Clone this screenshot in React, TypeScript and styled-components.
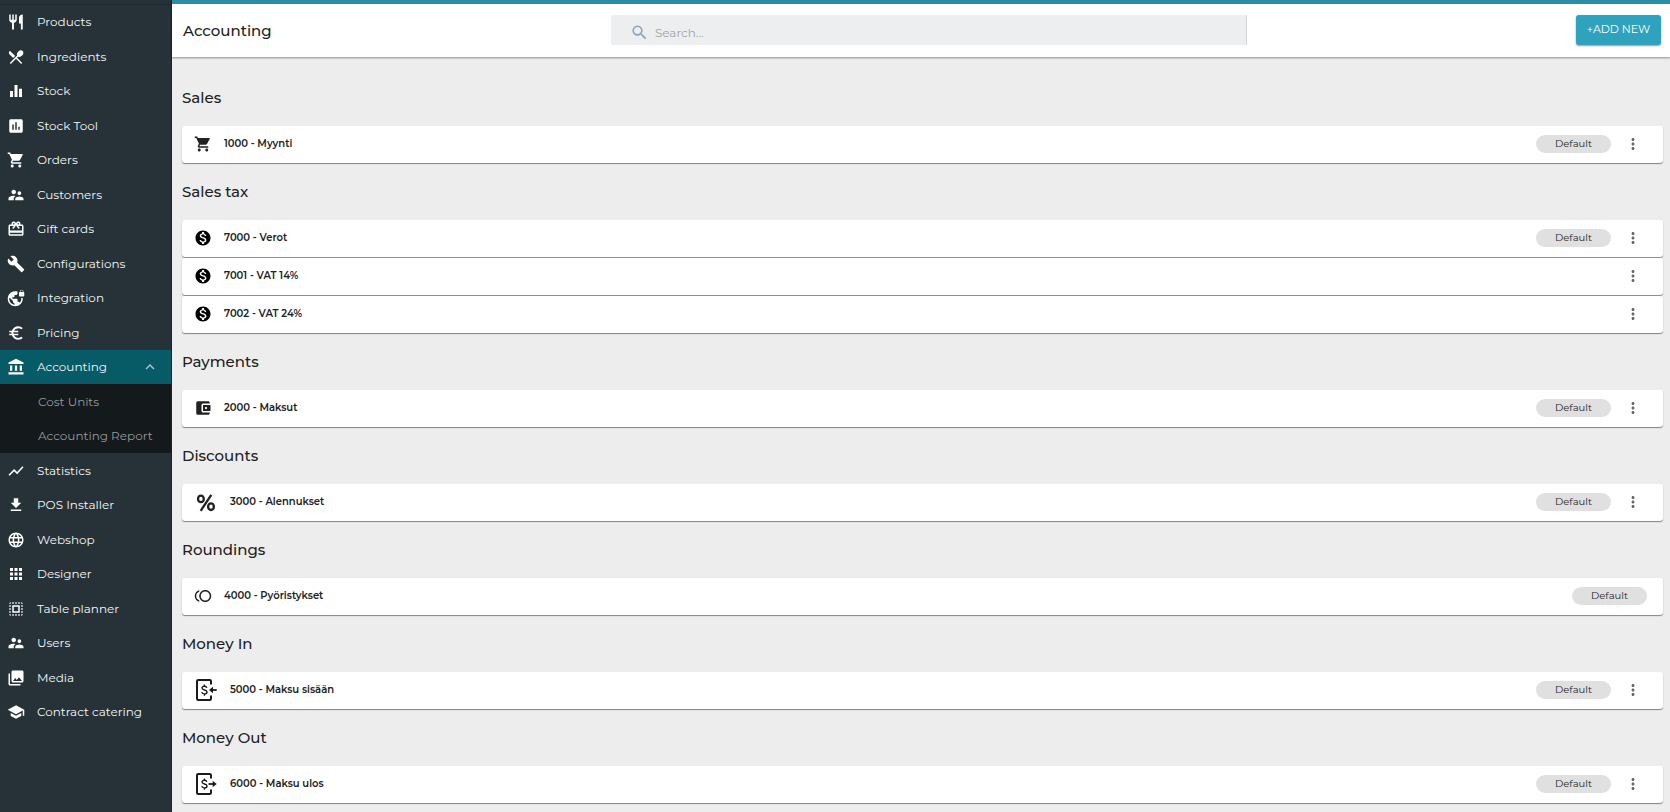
import React from "react";
import styled, { createGlobalStyle } from "styled-components";
import type { IconType } from "react-icons";
import {
  MdRestaurant, MdRestaurantMenu, MdEqualizer, MdAssessment, MdShoppingCart,
  MdSupervisorAccount, MdCardGiftcard, MdBuild, MdVpnLock, MdEuroSymbol,
  MdAccountBalance, MdShowChart, MdGetApp, MdLanguage, MdApps, MdSelectAll,
  MdPhotoLibrary, MdSchool, MdExpandLess, MdSearch, MdMonetizationOn,
  MdAccountBalanceWallet, MdToll, MdMoreVert,
} from "react-icons/md";

const GlobalStyle = createGlobalStyle`
  *, *::before, *::after { box-sizing: border-box; }
  body {
    margin: 0;
    background: #ededed;
    color: #212121;
    font-family: Montserrat, Inter, "Liberation Sans", sans-serif;
    font-size: 12px;
  }
  ul { list-style: none; margin: 0; padding: 0; }
  button, input { font: inherit; }
  svg { display: block; flex: none; }
`;

const Shell = styled.div`
  display: grid;
  grid-template-columns: 172px minmax(0, 1fr);
  min-height: 100vh;
`;

const Sidebar = styled.nav`
  background: #273238;
  border-right: 1px solid #1b2529;
`;

const NavList = styled.ul`
  margin-top: 4px;
  border-top: 1px solid #1f292e;
`;

const NavLink = styled.a<{ $active?: boolean; $tall?: boolean }>`
  display: flex;
  align-items: center;
  gap: 12px;
  height: ${(p) => (p.$tall ? 35 : 34)}px;
  padding: 0 12px 0 7px;
  color: #f3f5f6;
  background: ${(p) => (p.$active ? "#065b67" : "transparent")};
  line-height: 16px;
  text-decoration: none;
  white-space: nowrap;

  svg { color: #fff; }
`;

const NavText = styled.span`
  flex: 1;
`;

const Caret = styled(MdExpandLess)`
  && { color: #a9c6ca; }
`;

const SubList = styled.ul`
  background: #14191c;
`;

const SubLink = styled(NavLink)`
  padding-left: 38px;
  color: #95999b;
`;

const Header = styled.header`
  position: relative;
  display: grid;
  grid-template-columns: 29fr 43fr 28fr;
  align-items: start;
  height: 57px;
  padding: 11px 9px 0 10px;
  border-top: 4px solid #278fa7;
  background: #fff;
  box-shadow: 0 1px 2px rgba(0, 0, 0, 0.4);
`;

const PageTitle = styled.h1`
  margin: 0;
  padding-left: 1px;
  font-size: 15px;
  line-height: 32px;
  font-weight: 500;
`;

const SearchBox = styled.label`
  display: flex;
  align-items: center;
  gap: 6px;
  height: 30px;
  padding: 4px 16px 0 19px;
  background: #eceef0;
  border-right: 1px solid #d3d6d9;
  color: #8fa3b8;
`;

const SearchInput = styled.input`
  flex: 1;
  min-width: 0;
  padding: 0;
  border: 0;
  outline: 0;
  background: transparent;
  color: #212121;

  &::placeholder { color: #a3a5a7; opacity: 1; }
`;

const AddButton = styled.button`
  justify-self: end;
  width: 85px;
  height: 30px;
  padding: 0 0 2px;
  border: 0;
  border-radius: 3px;
  background: #2fa2be;
  color: #fff;
  font-size: 11px;
  box-shadow: 0 1px 2px rgba(0, 0, 0, 0.4);
`;

const Content = styled.main`
  padding: 31px 7px 9px 10px;
`;

const Section = styled.section`
  & + & { margin-top: 19px; }
`;

const SectionTitle = styled.h2`
  margin: 0 0 18px;
  font-size: 15px;
  line-height: 20px;
  font-weight: 500;
`;

const Cards = styled.ul`
  display: grid;
  gap: 1px;
`;

const Card = styled.li`
  display: flex;
  align-items: center;
  height: 37px;
  padding: 0 16px 2px 12px;
  border-radius: 3px;
  background: #fff;
  box-shadow: 0 1px 1px rgba(0, 0, 0, 0.45);
`;

const CardName = styled.span`
  flex: 1;
  margin-left: 12px;
  font-size: 10px;
  font-weight: 600;
`;

const Chip = styled.span`
  width: 75px;
  border-radius: 9px;
  background: #e0e0e0;
  color: #262626;
  font-size: 10px;
  line-height: 18px;
  text-align: center;
`;

const MenuButton = styled.button`
  display: grid;
  place-items: center;
  width: 28px;
  height: 28px;
  margin-left: 8px;
  padding: 0;
  border: 0;
  background: none;
  color: #666;
`;

const Percent = () => (
  <svg width="24" height="24" viewBox="0 0 24 24" fill="none" stroke="#212121" strokeWidth="2.300">
    <ellipse cx="6.900" cy="8.900" rx="2.900" ry="3.300" />
    <ellipse cx="17" cy="16.700" rx="2.900" ry="3.300" />
    <path d="M17.300 4.800 6.700 20.800" />
  </svg>
);

const MoneyDoor = ({ out }: { out?: boolean }) => (
  <svg width="24" height="24" viewBox="0 0 24 24" fill="none" stroke="#1b1b1b" strokeWidth="2">
    <path d="M17 6.500V3.200Q17 2 15.800 2H4.200Q3 2 3 3.200v17.600Q3 22 4.200 22h11.600Q17 22 17 20.800V17.500" />
    <path strokeWidth="1.400" d="M12.800 9.900C12.500 8.800 11.600 8.300 10.400 8.300c-1.400 0-2.400.7-2.400 1.800 0 2.600 5 1.200 5 3.900 0 1.200-1.100 1.900-2.600 1.900-1.400 0-2.400-.7-2.600-1.900M10.400 6.500v1.800M10.400 15.900v1.800" />
    <path strokeWidth="1.800" d={out ? "M14.500 12H20" : "M18 12h4.700"} />
    <path fill="#1b1b1b" stroke="none" d={out ? "M18.700 8.800 22.700 12l-4 3.200z" : "M19 8.800 15 12l4 3.200z"} />
  </svg>
);

const nav: { label: string; icon: IconType; children?: string[] }[] = [
  { label: "Products", icon: MdRestaurant },
  { label: "Ingredients", icon: MdRestaurantMenu },
  { label: "Stock", icon: MdEqualizer },
  { label: "Stock Tool", icon: MdAssessment },
  { label: "Orders", icon: MdShoppingCart },
  { label: "Customers", icon: MdSupervisorAccount },
  { label: "Gift cards", icon: MdCardGiftcard },
  { label: "Configurations", icon: MdBuild },
  { label: "Integration", icon: MdVpnLock },
  { label: "Pricing", icon: MdEuroSymbol },
  { label: "Accounting", icon: MdAccountBalance, children: ["Cost Units", "Accounting Report"] },
  { label: "Statistics", icon: MdShowChart },
  { label: "POS Installer", icon: MdGetApp },
  { label: "Webshop", icon: MdLanguage },
  { label: "Designer", icon: MdApps },
  { label: "Table planner", icon: MdSelectAll },
  { label: "Users", icon: MdSupervisorAccount },
  { label: "Media", icon: MdPhotoLibrary },
  { label: "Contract catering", icon: MdSchool },
];

interface Account {
  name: string;
  isDefault?: boolean;
  locked?: boolean;
}

const sections: { title: string; icon: React.ReactNode; accounts: Account[] }[] = [
  { title: "Sales", icon: <MdShoppingCart size={18} />, accounts: [{ name: "1000 - Myynti", isDefault: true }] },
  {
    title: "Sales tax",
    icon: <MdMonetizationOn size={18} color="#000" />,
    accounts: [{ name: "7000 - Verot", isDefault: true }, { name: "7001 - VAT 14%" }, { name: "7002 - VAT 24%" }],
  },
  { title: "Payments", icon: <MdAccountBalanceWallet size={18} />, accounts: [{ name: "2000 - Maksut", isDefault: true }] },
  { title: "Discounts", icon: <Percent />, accounts: [{ name: "3000 - Alennukset", isDefault: true }] },
  { title: "Roundings", icon: <MdToll size={18} />, accounts: [{ name: "4000 - Pyöristykset", isDefault: true, locked: true }] },
  { title: "Money In", icon: <MoneyDoor />, accounts: [{ name: "5000 - Maksu sisään", isDefault: true }] },
  { title: "Money Out", icon: <MoneyDoor out />, accounts: [{ name: "6000 - Maksu ulos", isDefault: true }] },
];

export default function App() {
  return (
    <>
      <GlobalStyle />
      <Shell>
        <Sidebar aria-label="Main">
          <NavList>
            {nav.map(({ label, icon: Icon, children }, i) => (
              <li key={label}>
                <NavLink href="#" $active={!!children} $tall={i % 2 === 1}>
                  <Icon size={18} />
                  <NavText>{label}</NavText>
                  {children && <Caret size={18} />}
                </NavLink>
                {children && (
                  <SubList>
                    {children.map((child, j) => (
                      <li key={child}>
                        <SubLink href="#" $tall={j % 2 === 0}>{child}</SubLink>
                      </li>
                    ))}
                  </SubList>
                )}
              </li>
            ))}
          </NavList>
        </Sidebar>
        <div>
          <Header>
            <PageTitle>Accounting</PageTitle>
            <SearchBox>
              <MdSearch size={19} />
              <SearchInput type="search" placeholder="Search..." aria-label="Search" />
            </SearchBox>
            <AddButton type="button">+ADD NEW</AddButton>
          </Header>
          <Content>
            {sections.map(({ title, icon, accounts }) => (
              <Section key={title}>
                <SectionTitle>{title}</SectionTitle>
                <Cards>
                  {accounts.map(({ name, isDefault, locked }) => (
                    <Card key={name}>
                      {icon}
                      <CardName>{name}</CardName>
                      {isDefault && <Chip>Default</Chip>}
                      {!locked && (
                        <MenuButton type="button" aria-label={`Options for ${name}`}>
                          <MdMoreVert size={18} />
                        </MenuButton>
                      )}
                    </Card>
                  ))}
                </Cards>
              </Section>
            ))}
          </Content>
        </div>
      </Shell>
    </>
  );
}
